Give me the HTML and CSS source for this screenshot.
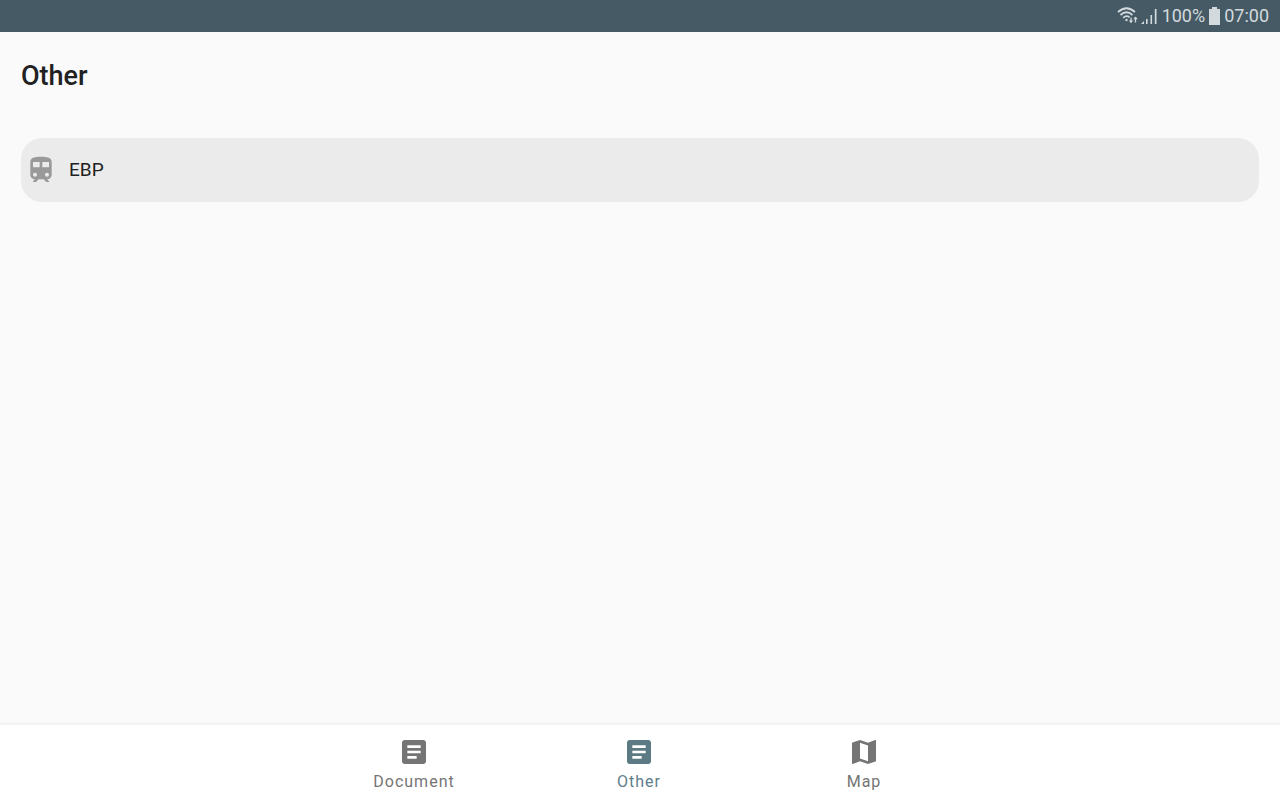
FILE: index.html
```html
<!DOCTYPE html>
<html lang="en">
<head>
<meta charset="utf-8">
<meta name="viewport" content="width=device-width, initial-scale=1">
<title>Other</title>
<link rel="stylesheet" href="styles.css">
</head>
<body>
<div class="status-bar">
  <svg class="status-wifi" viewBox="0 0 22 20" width="22" height="20" fill="none" stroke="currentColor" stroke-width="1.700" aria-hidden="true">
    <path d="M1 6Q9.500 -1.500 18 6M3.500 9Q9.500 3.500 15.500 9M6.200 11.800Q9.500 8.800 12.500 11.300"/>
    <circle cx="9.500" cy="14" r="1.200" fill="currentColor" stroke="none"/>
    <path stroke-width="1.300" d="M14 11.500V16M18.500 16.500V11.500"/>
    <path fill="currentColor" stroke="none" d="M11.800 14.500h4.400l-2.200 2.800zM16.300 13.200h4.400l-2.200-2.800z"/>
  </svg>
  <svg class="status-signal" viewBox="0 0 17 18" width="17" height="18" fill="currentColor" aria-hidden="true">
    <path d="M0 17l3-3v3zM5 12h1.600v5H5zM9.500 8h1.600v9H9.500zM13.800 2h1.700v15h-1.700z"/>
  </svg>
  <span class="status-text">100%</span>
  <svg class="status-battery" viewBox="0 0 11 18" width="11" height="18" fill="currentColor" aria-hidden="true">
    <path d="M3 0h5v2h3v16H0V2h3z"/>
  </svg>
  <span class="status-text">07:00</span>
</div>

<main class="content">
  <h1 class="title">Other</h1>
  <button class="entry" type="button">
    <svg class="icon" viewBox="0 0 24 24" fill="currentColor" aria-hidden="true">
      <path d="M12 2c-4.420 0-8 .5-8 4v9.500C4 17.430 5.570 19 7.500 19L6 20.500v.5h2.230l2-2H14l2 2h2v-.5L16.500 19c1.930 0 3.500-1.570 3.500-3.500V6c0-3.500-3.580-4-8-4zM7.500 17c-.83 0-1.500-.67-1.500-1.500S6.670 14 7.500 14s1.500.67 1.500 1.500S8.330 17 7.500 17zm3.500-7H6V6h5v4zm2 0V6h5v4h-5zm3.500 7c-.83 0-1.500-.67-1.500-1.500s.67-1.500 1.500-1.500 1.500.67 1.500 1.500-.67 1.500-1.500 1.500z"/>
    </svg>
    <span>EBP</span>
  </button>
</main>

<nav class="tabs">
  <button class="tab" type="button">
    <svg class="icon" viewBox="0 0 24 24" fill="currentColor" aria-hidden="true">
      <path d="M19 3H5c-1.100 0-2 .9-2 2v14c0 1.100.9 2 2 2h14c1.100 0 2-.9 2-2V5c0-1.100-.9-2-2-2zm-5 14H7v-2h7v2zm3-4H7v-2h10v2zm0-4H7V7h10v2z"/>
    </svg>
    <span>Document</span>
  </button>
  <button class="tab tab-active" type="button" aria-current="page">
    <svg class="icon" viewBox="0 0 24 24" fill="currentColor" aria-hidden="true">
      <path d="M19 3H5c-1.100 0-2 .9-2 2v14c0 1.100.9 2 2 2h14c1.100 0 2-.9 2-2V5c0-1.100-.9-2-2-2zm-5 14H7v-2h7v2zm3-4H7v-2h10v2zm0-4H7V7h10v2z"/>
    </svg>
    <span>Other</span>
  </button>
  <button class="tab" type="button">
    <svg class="icon" viewBox="0 0 24 24" fill="currentColor" aria-hidden="true">
      <path d="M20.500 3l-.16.03L15 5.100 9 3 3.360 4.900c-.21.070-.36.250-.36.480V20.500c0 .28.220.5.5.5l.16-.03L9 18.900l6 2.100 5.640-1.900c.21-.07.360-.25.360-.48V3.500c0-.28-.22-.5-.5-.5zM15 19l-6-2.110V5l6 2.110V19z"/>
    </svg>
    <span>Map</span>
  </button>
</nav>
</body>
</html>
```
FILE: styles.css
```css
* {
  box-sizing: border-box;
}

body {
  margin: 0;
  min-height: 100vh;
  display: flex;
  flex-direction: column;
  background: #fafafa;
  color: #212121;
  font-family: Roboto, "Liberation Sans", sans-serif;
}

button {
  border: 0;
  margin: 0;
  font-family: inherit;
  cursor: pointer;
}

.icon {
  display: block;
  width: 32px;
  height: 32px;
  flex: none;
}

.status-bar {
  display: flex;
  align-items: center;
  justify-content: flex-end;
  gap: 4px;
  height: 32px;
  padding: 0 11px;
  background: #455a64;
  color: #d3dade;
}

.status-wifi {
  margin-right: -2px;
}

.status-text {
  font-size: 18px;
  line-height: 34px;
}

.content {
  flex: 1;
  padding: 28px 21px;
}

.title {
  margin: 0 0 46px;
  font-size: 27px;
  line-height: 32px;
  font-weight: 500;
}

.entry {
  display: flex;
  align-items: center;
  gap: 12px;
  width: 100%;
  height: 64px;
  padding: 0 4px;
  border-radius: 21px;
  background: #ebebeb;
  color: #212121;
  font-size: 19px;
  line-height: 20px;
  text-align: left;
}

.entry .icon {
  color: #999;
}

.tabs {
  display: flex;
  justify-content: center;
  padding-right: 2px;
  background: #fff;
  border-top: 1px solid #f3f3f3;
  box-shadow: 0 -1px 2px rgba(0, 0, 0, 0.05);
}

.tab {
  display: flex;
  flex-direction: column;
  align-items: center;
  gap: 4px;
  width: 225px;
  padding: 11px 0 8px;
  background: none;
  color: #757575;
  font-size: 16px;
  line-height: 20px;
  letter-spacing: 1px;
}

.tab-active {
  color: #607d8b;
}

.tab-active .icon {
  color: #5b7a84;
}
```
